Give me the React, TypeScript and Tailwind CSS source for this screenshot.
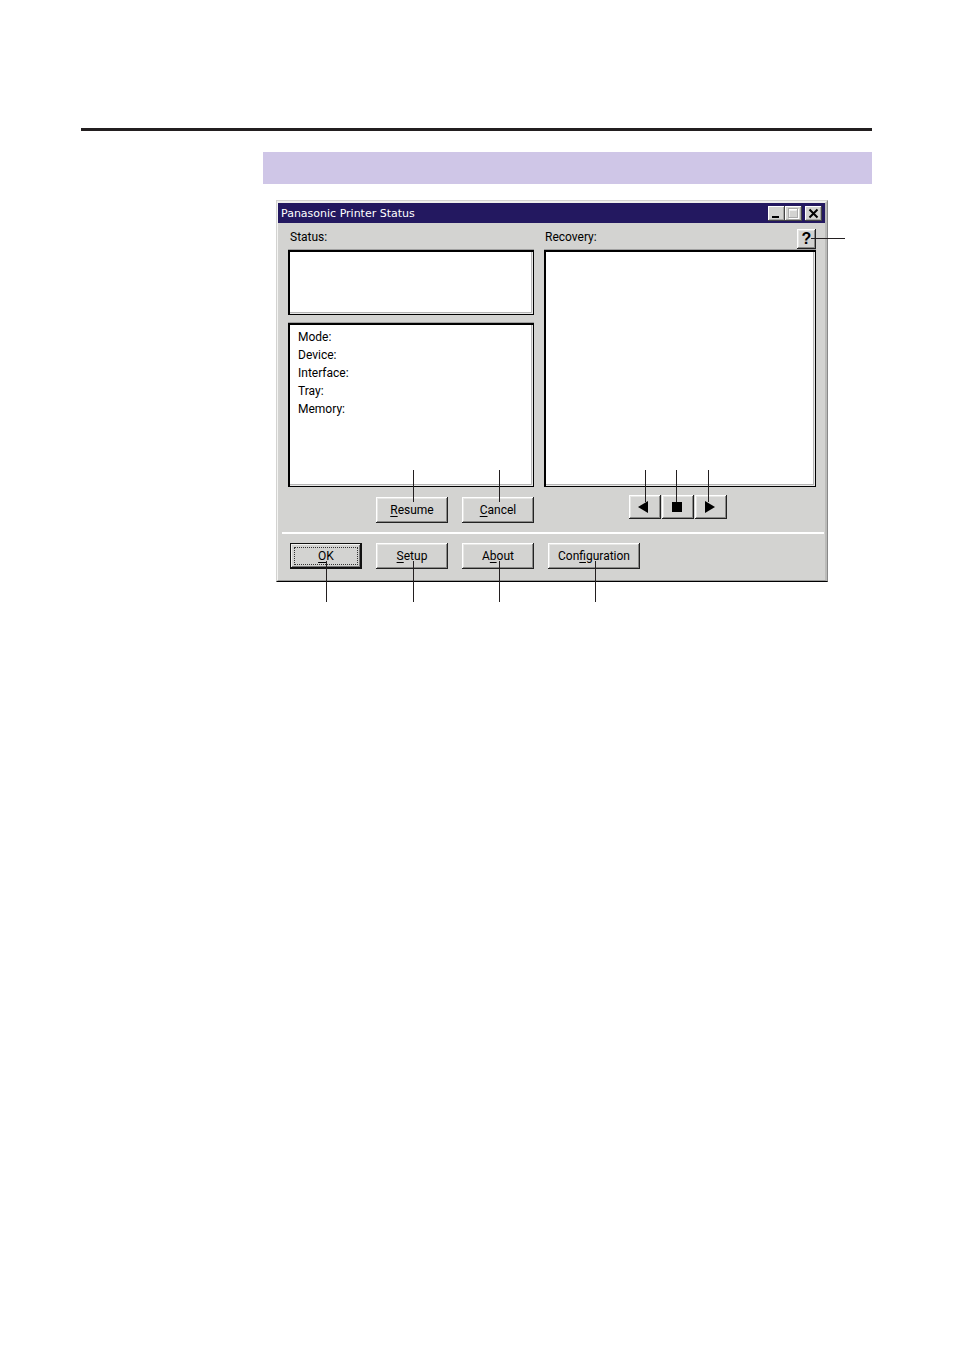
import type { ReactNode } from "react";
import clsx from "clsx";

const details = ["Mode:", "Device:", "Interface:", "Tray:", "Memory:"];

const bevel =
  "bg-[#d3d3d1] shadow-[inset_-1px_-1px_0_#222,inset_1px_1px_0_#fff,inset_-2px_-2px_0_#8a8a88,inset_2px_2px_0_#e6e6e4]";
const smallBevel =
  "bg-[#d3d3d1] shadow-[inset_-1px_-1px_0_#444,inset_1px_1px_0_#fff,inset_-2px_-2px_0_#a5a5a3]";
const sunken =
  "bg-white border-2 border-black border-r border-b shadow-[0_-1px_0_#a0a0a0,inset_-1px_-1px_0_#e8e8e8,inset_-2px_-2px_0_#b4b4b4]";

// Thin line that leads from a control to its number in the manual
function Leader({ className }: { className: string }) {
  return <span aria-hidden="true" className={clsx("absolute bg-[#231f20] pointer-events-none", className)} />;
}

function DialogButton({ children, wide, focused }: { children: ReactNode; wide?: boolean; focused?: boolean }) {
  return (
    <button
      type="button"
      className={clsx(
        "h-[26px] text-center",
        wide ? "w-[92px]" : "w-[72px]",
        focused
          ? "bg-[#d3d3d1] p-1 shadow-[inset_0_0_0_1px_#111,inset_-2px_-2px_0_#111,inset_2px_2px_0_#f2f2f0,inset_-3px_-3px_0_#777]"
          : bevel
      )}
    >
      <span className={clsx("flex items-center justify-center", focused && "h-full border border-dotted border-[#333]")}>
        <span>{children}</span>
      </span>
    </button>
  );
}

function Key({ children }: { children: string }) {
  return <span className="underline underline-offset-2">{children}</span>;
}

function TitleBar() {
  return (
    <div className="flex h-5 items-center justify-between bg-[#231860] pr-[3px] pl-[3px]">
      <h1 className="pt-px font-['DejaVu_Sans'] text-[11px] leading-4 text-white">Panasonic Printer Status</h1>
      <div className="flex">
        <button type="button" aria-label="Minimize" className={clsx("h-[15px] w-[17px]", smallBevel)}>
          <svg viewBox="0 0 17 15" className="h-[15px] w-[17px]">
            <rect x="4" y="10" width="7" height="2" fill="#000" />
          </svg>
        </button>
        <button type="button" aria-label="Maximize" disabled className={clsx("h-[15px] w-[17px]", smallBevel)}>
          <svg viewBox="0 0 17 15" className="h-[15px] w-[17px]" fill="none">
            <rect x="4.5" y="3.5" width="9" height="9" stroke="#fff" />
            <rect x="3.5" y="2.5" width="9" height="9" stroke="#aaa" />
            <path d="M4.5 11V4.500h7" stroke="#eee" />
          </svg>
        </button>
        <button type="button" aria-label="Close" className={clsx("ml-[3px] h-[15px] w-[17px]", smallBevel)}>
          <svg viewBox="0 0 17 15" className="h-[15px] w-[17px]">
            <path d="M4.5 3.500l8 8M12.5 3.500l-8 8" stroke="#000" strokeWidth="2" />
          </svg>
        </button>
      </div>
    </div>
  );
}

function PlayButton({ label, leader, children }: { label: string; leader: string; children: ReactNode }) {
  return (
    <div className="relative">
      <button type="button" aria-label={label} className={clsx("block h-6 w-8", bevel)}>
        <svg viewBox="0 0 32 24" className="h-6 w-8" fill="#000">
          {children}
        </svg>
      </button>
      <Leader className={clsx("bottom-[17px] h-8 w-px", leader)} />
    </div>
  );
}

export default function App() {
  return (
    <main className="min-h-screen bg-white pt-32 pr-[82px] pb-16 pl-[81px] font-[Roboto,sans-serif] text-xs text-black">
      <div className="h-[3px] bg-[#231f20]" />

      <div className="mt-[21px] ml-[182px]">
        <div className="h-8 bg-[#cfc6e7]" />

        <section className="mt-4 mr-11 ml-[13px] border border-t-[#d3d3d1] border-r-[#888] border-b-black border-l-[#d3d3d1] bg-[#d3d3d1]">
          <div className="border-t-2 border-r-2 border-b border-l border-t-[#eeeeec] border-r-[#bbbbb9] border-b-[#999997] border-l-[#f4f4f2]">
            <TitleBar />

            <div className="grid grid-cols-[246fr_272fr] gap-x-[10px] pr-[9px] pl-[10px]">
              <div className="flex flex-col">
                <label htmlFor="status" className="h-[27px] pt-[6px] pl-[2px] leading-4">
                  Status:
                </label>
                <textarea id="status" readOnly className={clsx("block h-[65px] resize-none", sunken)} />
                <ul className={clsx("mt-2 h-[164px] pt-[3px] pl-2 leading-[18px]", sunken)}>
                  {details.map((item) => (
                    <li key={item}>{item}</li>
                  ))}
                </ul>
                <div className="flex h-[45px] justify-end gap-[14px] pt-[10px]">
                  <div className="relative">
                    <DialogButton><Key>R</Key>esume</DialogButton>
                    <Leader className="bottom-[30px] left-[37px] h-8 w-px" />
                  </div>
                  <div className="relative">
                    <DialogButton><Key>C</Key>ancel</DialogButton>
                    <Leader className="bottom-[30px] left-[37px] h-8 w-px" />
                  </div>
                </div>
              </div>

              <div className="flex flex-col">
                <div className="flex h-[27px] items-start justify-between pt-[6px]">
                  <label htmlFor="recovery" className="pl-px leading-4">
                    Recovery:
                  </label>
                  <div className="relative">
                    <button
                      type="button"
                      aria-label="Help"
                      className={clsx("block h-5 w-[19px] font-['Liberation_Sans'] text-base leading-5 font-bold", bevel)}
                    >
                      ?
                    </button>
                    <Leader className="top-[9px] left-[14px] h-px w-[34px]" />
                  </div>
                </div>
                <textarea id="recovery" readOnly className={clsx("block h-[237px] resize-none", sunken)} />
                <div className="flex justify-center gap-px pt-2 pr-1">
                  <PlayButton label="Previous" leader="left-4">
                    <path d="M9 12l10-6v12z" />
                  </PlayButton>
                  <PlayButton label="Stop" leader="left-[14px]">
                    <rect x="10" y="7" width="10" height="10" />
                  </PlayButton>
                  <PlayButton label="Next" leader="left-[13px]">
                    <path d="M20 12L10 6v12z" />
                  </PlayButton>
                </div>
              </div>
            </div>

            <hr className="mr-px ml-1 border-t-2 border-white" />

            <div className="flex gap-[14px] pt-[9px] pb-[11px] pl-3">
              <div className="relative">
                <DialogButton focused><Key>O</Key>K</DialogButton>
                <Leader className="top-[18px] left-9 h-[41px] w-px" />
              </div>
              <div className="relative">
                <DialogButton><Key>S</Key>etup</DialogButton>
                <Leader className="top-[18px] left-[37px] h-[41px] w-px" />
              </div>
              <div className="relative">
                <DialogButton>A<Key>b</Key>out</DialogButton>
                <Leader className="top-[18px] left-[37px] h-[41px] w-px" />
              </div>
              <div className="relative">
                <DialogButton wide>Con<Key>f</Key>iguration</DialogButton>
                <Leader className="top-[18px] left-[47px] h-[41px] w-px" />
              </div>
            </div>
          </div>
        </section>
      </div>
    </main>
  );
}
